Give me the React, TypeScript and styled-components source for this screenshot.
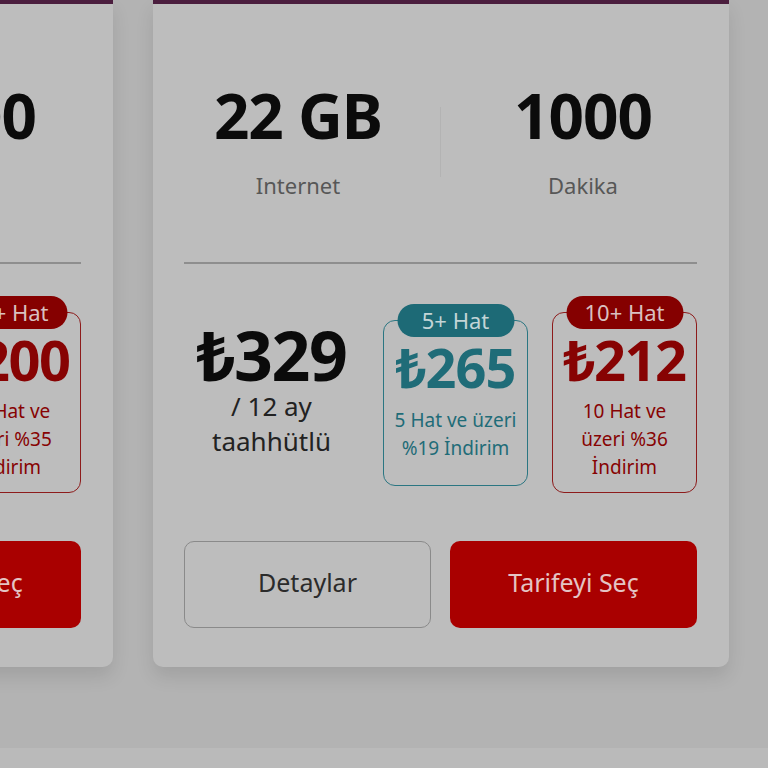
import React from "react";
import styled, { createGlobalStyle } from "styled-components";

const GlobalStyle = createGlobalStyle`
  html, body { margin: 0; padding: 0; background: #b3b3b3; }
  body { font-family: "Noto Sans", "Open Sans", "DejaVu Sans", sans-serif; overflow: hidden; }
  * { box-sizing: border-box; }
`;

const Page = styled.div`
  width: 768px;
  height: 768px;
  display: flex;
  flex-direction: column;
  overflow: hidden;
  background: #b3b3b3;
`;

const Stage = styled.main`
  height: 748px;
  flex: none;
  overflow: hidden;
`;

const Footer = styled.footer`
  flex: 1;
  background: #bababa;
`;

const Track = styled.div`
  display: flex;
  gap: 40px;
  width: max-content;
  margin-left: -463px;
  padding-bottom: 40px;
`;

const Card = styled.article`
  width: 576px;
  flex: none;
  background: #bdbdbd;
  border-top: 4px solid #4b1e3e;
  border-radius: 0 0 10px 10px;
  box-shadow: 0 10px 18px rgba(0, 0, 0, 0.1);
  padding: 0 32px 39px 31px;
`;

const StatsRow = styled.div`
  display: grid;
  grid-template-columns: 1fr 1px 1fr;
  column-gap: 28px;
  align-items: center;
  padding-top: 80px;
`;

const Stat = styled.div`
  text-align: center;
`;

const StatValue = styled.div`
  font-size: 62px;
  line-height: 62px;
  font-weight: 700;
  letter-spacing: -1px;
  color: #0b0b0b;
`;

const StatLabel = styled.div`
  margin-top: 24px;
  font-size: 22px;
  line-height: 30px;
  color: #575757;
`;

const StatDivider = styled.div`
  width: 1px;
  height: 70px;
  background: #b3b3b3;
`;

const Rule = styled.hr`
  margin: 62px 0 0;
  border: none;
  height: 2px;
  background: #8e8e8e;
`;

const PriceRow = styled.div`
  display: flex;
  align-items: center;
  gap: 24px;
  margin-top: 48px;
`;

const BasePrice = styled.div`
  flex: 1;
  text-align: center;
  margin-bottom: 26px;
  color: #0b0b0b;
`;

const BaseAmount = styled.div`
  font-size: 68px;
  line-height: 68px;
  font-weight: 700;
  letter-spacing: -1.5px;
`;

const BaseNote = styled.div`
  font-size: 26px;
  line-height: 35px;
  color: #222;
`;

type Tone = "teal" | "red";

const toneColor = (t: Tone) => (t === "teal" ? "#1f6c78" : "#870303");
const toneBorder = (t: Tone) => (t === "teal" ? "#2b7682" : "#8d1b1b");

const DealBox = styled.div<{ $tone: Tone }>`
  position: relative;
  width: 145px;
  flex: none;
  text-align: center;
  border: 1.5px solid ${(p) => toneBorder(p.$tone)};
  border-radius: 12px;
  color: ${(p) => toneColor(p.$tone)};
  padding: ${(p) => (p.$tone === "teal" ? "19px 6px 23px" : "18px 6px 11px")};
`;

const Badge = styled.div<{ $tone: Tone }>`
  position: absolute;
  top: -17px;
  left: 50%;
  transform: translateX(-50%);
  width: 117px;
  height: 33px;
  border-radius: 17px;
  background: ${(p) => (p.$tone === "teal" ? "#1d6a76" : "#850000")};
  color: ${(p) => (p.$tone === "teal" ? "#c3d5d7" : "#d9c0c0")};
  font-size: 22px;
  line-height: 33px;
  white-space: nowrap;
`;

const DealAmount = styled.div<{ $tone: Tone }>`
  font-weight: 700;
  font-size: ${(p) => (p.$tone === "teal" ? 54 : 56)}px;
  line-height: ${(p) => (p.$tone === "teal" ? 54 : 56)}px;
  letter-spacing: ${(p) => (p.$tone === "teal" ? -1 : -1.5)}px;
  margin-bottom: ${(p) => (p.$tone === "teal" ? 12 : 10)}px;
`;

const DealText = styled.div`
  font-size: 19px;
  line-height: 28px;
`;

const Actions = styled.div`
  display: grid;
  grid-template-columns: 1fr 1fr;
  gap: 19px;
  margin-top: 48px;
`;

const Button = styled.button<{ $primary?: boolean }>`
  height: 87px;
  border-radius: 10px;
  font-family: inherit;
  font-size: 25px;
  line-height: 1;
  padding: 0 0 4px;
  cursor: pointer;
  border: ${(p) => (p.$primary ? "none" : "1.5px solid #8a8a8a")};
  background: ${(p) => (p.$primary ? "#a90000" : "transparent")};
  color: ${(p) => (p.$primary ? "#e4c4c4" : "#2b2b2b")};
`;

type Plan = {
  data: string;
  minutes: string;
  minutesLabel: string;
  price: string;
  five: string;
  fiveText: string[];
  ten: string;
  tenText: string[];
};

const plans: Plan[] = [
  {
    data: "20 GB",
    minutes: "1000",
    minutesLabel: "Dk",
    price: "309",
    five: "250",
    fiveText: ["5 Hat ve üzeri", "%19 İndirim"],
    ten: "200",
    tenText: ["10 Hat ve", "üzeri %35", "İndirim"],
  },
  {
    data: "22 GB",
    minutes: "1000",
    minutesLabel: "Dakika",
    price: "329",
    five: "265",
    fiveText: ["5 Hat ve üzeri", "%19 İndirim"],
    ten: "212",
    tenText: ["10 Hat ve", "üzeri %36", "İndirim"],
  },
];

const PlanCard = ({ plan }: { plan: Plan }) => (
  <Card>
    <StatsRow>
      <Stat>
        <StatValue>{plan.data}</StatValue>
        <StatLabel>Internet</StatLabel>
      </Stat>
      <StatDivider />
      <Stat>
        <StatValue>{plan.minutes}</StatValue>
        <StatLabel>{plan.minutesLabel}</StatLabel>
      </Stat>
    </StatsRow>
    <Rule />
    <PriceRow>
      <BasePrice>
        <BaseAmount>₺{plan.price}</BaseAmount>
        <BaseNote>/ 12 ay</BaseNote>
        <BaseNote>taahhütlü</BaseNote>
      </BasePrice>
      <DealBox $tone="teal">
        <Badge $tone="teal">5+ Hat</Badge>
        <DealAmount $tone="teal">₺{plan.five}</DealAmount>
        {plan.fiveText.map((t) => (
          <DealText key={t}>{t}</DealText>
        ))}
      </DealBox>
      <DealBox $tone="red">
        <Badge $tone="red">10+ Hat</Badge>
        <DealAmount $tone="red">₺{plan.ten}</DealAmount>
        {plan.tenText.map((t) => (
          <DealText key={t}>{t}</DealText>
        ))}
      </DealBox>
    </PriceRow>
    <Actions>
      <Button>Detaylar</Button>
      <Button $primary>Tarifeyi Seç</Button>
    </Actions>
  </Card>
);

export default function App() {
  return (
    <Page>
      <GlobalStyle />
      <Stage>
        <Track>
          {plans.map((p) => (
            <PlanCard key={p.price} plan={p} />
          ))}
        </Track>
      </Stage>
      <Footer />
    </Page>
  );
}
